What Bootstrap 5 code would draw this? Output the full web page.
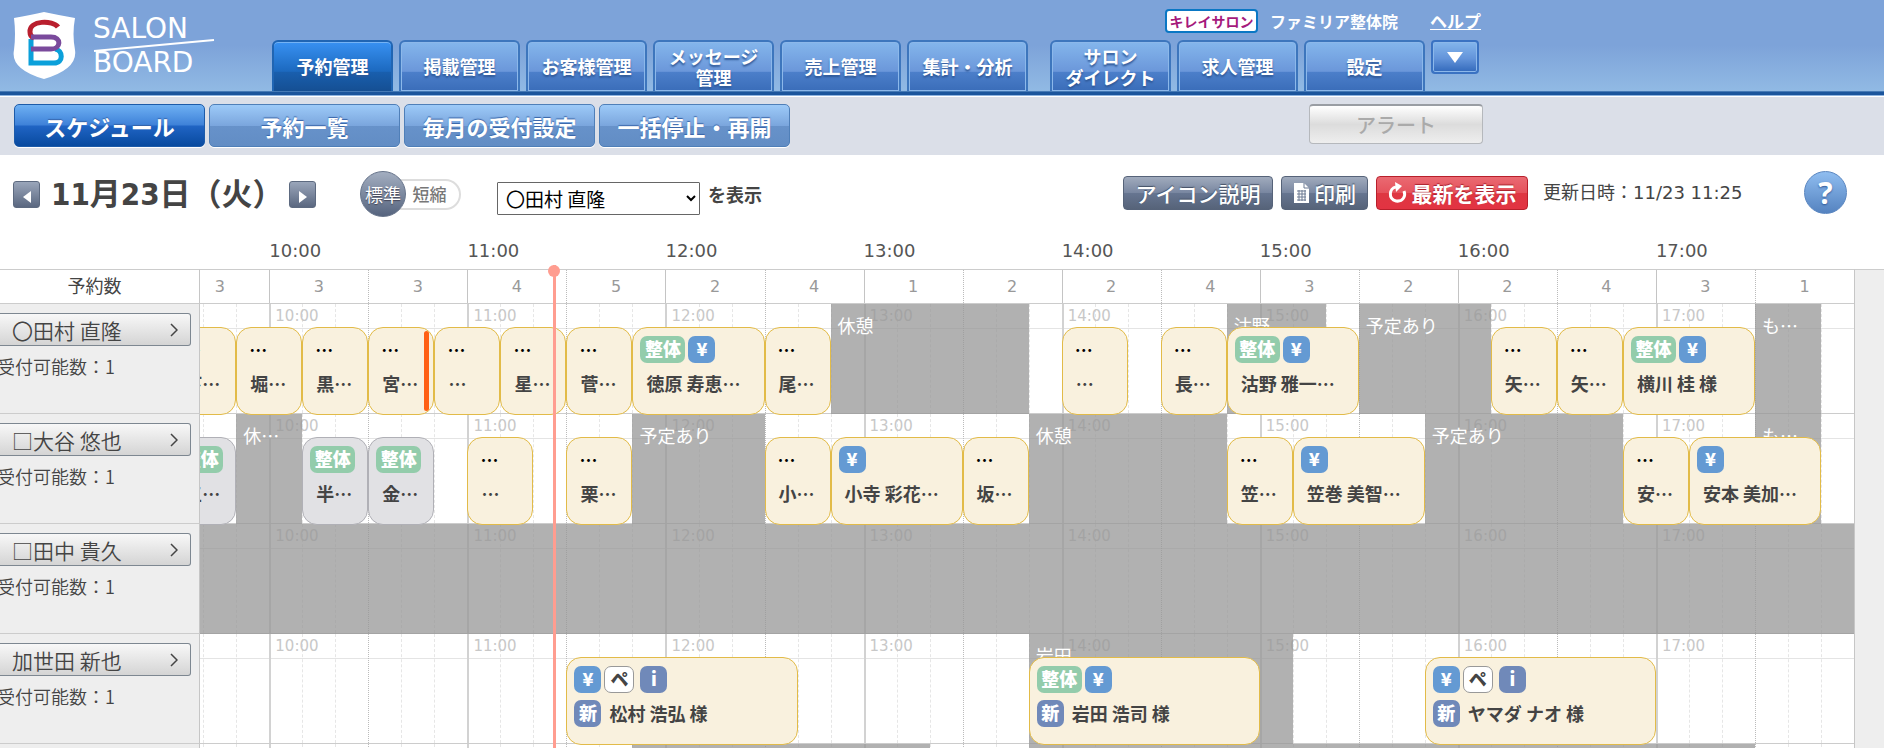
<!DOCTYPE html>
<html lang="ja">
<head>
<meta charset="utf-8">
<meta name="viewport" content="width=device-width, initial-scale=1">
<title>SALON BOARD スケジュール</title>
<link href="https://cdn.jsdelivr.net/npm/bootstrap@5.3.0/dist/css/bootstrap.min.css" rel="stylesheet">
<style>
  :root { --jp: "Noto Sans CJK JP", "DejaVu Sans", sans-serif; --num: "DejaVu Sans", "Noto Sans CJK JP", sans-serif; }
  body { font-family: var(--jp); font-size: 18px; line-height: 24px; color: #444; background: #fff; }
  button, select { font-family: inherit; }

  /* global header */
  .top-bar { height: 96px; background: linear-gradient(#7da3d9 0 45px, #91bae4 91px, #6f9fd0 91px, #1b559c 92px, #1b559c 95px, #8fb4e0 95px); }
  .brand { padding: 12px 0 0 13px; width: 272px; }
  .brand-name { font: 28px/34px "DejaVu Sans", sans-serif; color: #fff; margin-left: 17px; }
  .brand-name span { display: block; }
  .brand-name svg { position: absolute; left: 0; top: 26px; }
  .tab { width: 121px; height: 51px; border: 2px solid #3d76bd; border-bottom: 0; border-radius: 6px 6px 0 0; padding: 0;
    color: #fff; font-size: 18px; line-height: 21px; font-weight: 600; text-shadow: 0 2px 2px #2e5796;
    background: linear-gradient(#84b6ec, #6b97da 60%, #4c7fca 61%, #3a6db9); box-shadow: inset 0 0 0 1px #8cb8ea; }
  .tab.active { background: linear-gradient(#3891f2, #1c69bf 60%, #195fae 61%, #154f93); border-color: #2065b3; box-shadow: inset 0 1px #74b3f5; }
  .tab-more { width: 48px; height: 34px; border: 2px solid #3a72c2; border-radius: 4px; background: linear-gradient(#84b6ec, #6394da 55%, #3269bb); box-shadow: inset 0 0 0 1px #8cb8ea; padding: 0; }
  .account { height: 40px; padding-top: 9px; margin-right: -2px; color: #fff; font-weight: 700; font-size: 16px; }
  .kirei { border: 2px solid #0a77c4; border-radius: 4px; background: #fff; color: #a51a7c; font-size: 14px; line-height: 20px; height: 24px; width: 93px; text-align: center; white-space: nowrap; }
  .shop { margin-left: 12px; }
  .help-link { color: #fff; margin-left: 32px; font-size: 17px; }

  /* second level */
  .sub-bar { background: #dbdfe8; border-top: 1px solid #fff; padding: 7px 14px 8px; }
  .sub-btn { width: 191px; height: 43px; border: 1px solid #4f7fb8; border-radius: 5px; padding: 0; color: #fff; font-size: 22px; line-height: 30px; font-weight: 600;
    text-shadow: 0 -1px 1px #3663a8; background: linear-gradient(#9dcaf8, #7ba6dd 50%, #6792ca 51%, #628dc4); box-shadow: 0 1px #fff; }
  .sub-btn.active { background: linear-gradient(#6eb0f3, #3e81d8 49%, #2064c4 51%, #084a9f); border-color: #1d5ba9; }
  .alert-btn { width: 174px; height: 40px; border: 1px solid #b5b8bc; border-top: 2px solid #999da3; border-radius: 4px; color: #aaa; font-size: 20px; font-weight: 500; padding: 0;
    background: linear-gradient(#fff, #dcdcdc 50%, #eee); margin-left: 515px; }

  /* toolbar */
  .tools { padding: 16px 37px 0 13px; height: 77px; }
  .arrow-btn { width: 27px; height: 27px; border: 1px solid #5d6a80; border-radius: 3px; padding: 0; background: linear-gradient(#9aa6ba, #5a6780); line-height: 1; }
  .day { font: bold 31px/40px "DejaVu Sans Condensed", "Noto Sans CJK JP", sans-serif; width: 249px; padding-left: 11px; white-space: nowrap; }
  .size-switch { margin-left: 44px; width: 101px; }
  .size-on { width: 46px; height: 46px; border-radius: 50%; border: 1px solid #66738a; background: linear-gradient(#a3aec0, #56647e); color: #fff; font-size: 18px; padding: 0; position: relative; z-index: 1; text-shadow: 0 1px 1px #445; }
  .size-off { width: 81px; height: 31px; border: 2px solid #ddd; border-radius: 16px; background: #fff; color: #777; font-size: 17px; line-height: 24px; font-weight: 500; margin-left: -26px; padding: 0 0 0 18px; }
  .staff-select { width: 203px; height: 33px; border: 1px solid #666; border-radius: 1px; background: #fff; color: #000; font-size: 19px; margin-left: 36px; padding: 0 4px; }
  .tool-btn { height: 34px; border: 1px solid #566379; border-radius: 4px; background: linear-gradient(#a0abbd, #7886a0 50%, #667590 51%, #566379); color: #fff; font-size: 21px; line-height: 30px; padding: 0; font-weight: 500; text-shadow: 0 -1px 1px #445065; }
  .tool-btn.reload { background: linear-gradient(#ea6a72, #e5525c 50%, #de3742 51%, #e23342); border-color: #b81f2b; font-weight: 700; text-shadow: 0 -1px 1px #a8202b; }
  .updated { font-family: var(--num); width: 261px; margin-left: 15px; white-space: nowrap; }
  .ask { width: 43px; height: 43px; border-radius: 50%; border: 1px solid #5a86c0; background: linear-gradient(#8fbdf0, #5583c0); color: #fff; font: bold 30px/40px "Noto Sans", sans-serif; padding: 0; text-shadow: 0 1px 2px #2e5796; }

  /* schedule */
  .staff-col { width: 200px; }
  .end-col { width: 30px; background: #eee; border-left: 1px solid #c6c6c6; border-top: 1px solid #ccc; margin-top: 37px; }
  .axis { height: 37px; background: #fff; }
  .count-head { height: 35px; background: #fff; border-top: 1px solid #ccc; border-bottom: 1px solid #ccc; }
  .count-head.names { text-align: center; line-height: 30px; padding-right: 10px; border-right: 1px solid #c6c6c6; }
  .staff-cell { height: 110px; padding: 9px 8px 0 0; border-bottom: 1px solid #ccc; border-right: 1px solid #c6c6c6; background: #eee; }
  .staff-btn { width: 191px; height: 33px; border: 1px solid #7d8791; border-left: 0; border-radius: 0 3px 3px 0; background: linear-gradient(#f8f8f8, #d4d4d4); color: #444; font-size: 21px; line-height: 28px; padding: 0 12px; font-weight: 350; }
  .capacity { margin: 8px 0 0 -3px; white-space: nowrap; font-weight: 350; }
  .lane, .axis, .count-head { position: relative; }
  .lane { height: 110px; border-bottom: 1px solid #ccc; }
  .lane::before { content: ""; position: absolute; left: 0; right: 0; top: 24px; border-top: 1px solid #e4e4e4; }
  /* everything on the time axis is placed from its start (--s) and length (--d) in minutes */
  .at { position: absolute; left: calc((var(--s) - 579) / 501 * 100%); }
  .span-at { width: calc(var(--d) / 501 * 100%); }
  .axis .at { font: 18px/24px var(--num); color: #555; top: 7px; }
  .cnt { top: 5px; font: 16px/24px var(--num); color: #999; text-align: center; }
  .tick { top: 0; bottom: 0; border-left: 1px dashed #e6e6e6; }
  .tick.half { border-left: 1px dotted #bbb; }
  .tick.hour { border-left: 1px solid #c4c4c4; }
  .lane .tick.hour { border-left: 2px solid #d2d2d2; }
  .hh { font: 15px/20px var(--num); color: #c8c8c8; top: 2px; padding-left: 6px; }
  .off { top: 0; height: 110px; background: rgba(151,151,151,.75); color: #fff; padding: 9px 7px; white-space: nowrap; overflow: hidden; text-overflow: ellipsis; }
  .bk { top: 23px; height: 88px; border: 1px solid #e2bb48; border-radius: 15px; background: #f9f1de; padding: 8px 7px; text-align: left; color: #444; font-weight: 700; font-size: 18px; line-height: 27px; overflow: hidden; display: flex; flex-direction: column; gap: 7px; z-index: 1; }
  .bk.done { background: #e1e1e4; border-color: #b0b0b6; }
  .bk > span { display: flex; align-items: center; height: 27px; white-space: nowrap; }
  .bk .icons { gap: 3px; }
  .bk .dots { padding-left: 5px; color: #000; }
  .bk .who { padding-left: 6px; }
  .bk .tagi + .who { padding-left: 8px; }
  .tagi { height: 27px; min-width: 27px; border-radius: 7px; color: #fff; background: #649ad3; text-align: center; line-height: 24px; flex: none; }
  .tagi.seitai { width: 45px; background: #93ccab; }
  .tagi.pe { width: 30px; background: #fff; border: 1px solid #999; color: #444; margin-right: 3px; line-height: 22px; }
  .tagi.info { background: #7089b9; }
  .flagbar::after { content: ""; position: absolute; right: 4px; top: 3px; bottom: 3px; width: 5px; border-radius: 3px; background: #ff6015; }
  .now { top: 33px; bottom: 0; width: 3px; background: #ff9d90; z-index: 2; pointer-events: none; }
  .now::before { content: ""; position: absolute; left: -5px; top: 0; width: 12px; height: 12px; border-radius: 50%; background: #ff9d90; }
</style>
</head>
<body>
<div class="vh-100 overflow-hidden">
  <header class="top-bar d-flex">
    <a class="brand d-flex align-items-start text-decoration-none flex-shrink-0" href="#" aria-label="SALON BOARD">
      <svg width="63" height="67" viewBox="0 0 63 67" fill="none">
        <path d="M1 6Q18 3 31 0Q45 3 62 6Q59 22 62 38Q65 57 31 67Q-3 57 1 38Q3 22 1 6Z" fill="#fff"/>
        <g stroke-width="5">
          <path d="M18 27V51H41C51 51 50 38 42 37" stroke="#0ba0da"/>
          <path d="M45 15C40 8 16 8 17 20C17 23 18 25 21 26" stroke="#b91f2e"/>
          <path d="M18 25H38C49 25 48 37 38 37H18" stroke="#7a4a9c"/>
        </g>
      </svg>
      <span class="brand-name position-relative"><span>SALON</span><span>BOARD</span>
        <svg width="122" height="16" viewBox="0 0 122 16"><path d="M1 13L121 2" stroke="#fff" stroke-width="2"/></svg>
      </span>
    </a>
    <div class="flex-shrink-0">
      <div class="account d-flex justify-content-end align-items-start">
        <span class="kirei">キレイサロン</span>
        <span class="shop">ファミリア整体院</span>
        <a class="help-link" href="#">ヘルプ</a>
      </div>
      <nav class="d-flex align-items-start" style="gap:6px">
        <button class="tab active">予約管理</button>
        <button class="tab">掲載管理</button>
        <button class="tab">お客様管理</button>
        <button class="tab">メッセージ<br>管理</button>
        <button class="tab">売上管理</button>
        <button class="tab me-3">集計・分析</button>
        <button class="tab">サロン<br>ダイレクト</button>
        <button class="tab">求人管理</button>
        <button class="tab">設定</button>
        <button class="tab-more" aria-label="メニュー"><svg width="16" height="11" viewBox="0 0 16 11" class="d-block mx-auto"><path d="M0 0H16L8 11Z" fill="#fff"/></svg></button>
      </nav>
    </div>
  </header>

  <nav class="sub-bar d-flex gap-1">
    <button class="sub-btn active">スケジュール</button>
    <button class="sub-btn">予約一覧</button>
    <button class="sub-btn">毎月の受付設定</button>
    <button class="sub-btn">一括停止・再開</button>
    <button class="alert-btn">アラート</button>
  </nav>

  <div class="tools d-flex align-items-start">
    <div class="d-flex align-items-center">
      <button class="arrow-btn" aria-label="前の日"><svg width="8" height="12" viewBox="0 0 8 12"><path d="M8 0V12L0 6Z" fill="#fff"/></svg></button>
      <span class="day">11月23日（火）</span>
      <button class="arrow-btn" aria-label="次の日"><svg width="8" height="12" viewBox="0 0 8 12"><path d="M0 0V12L8 6Z" fill="#fff"/></svg></button>
      <div class="size-switch d-flex align-items-center">
        <button class="size-on">標準</button><button class="size-off">短縮</button>
      </div>
      <select class="staff-select mt-2" id="staff"><option>〇田村 直隆</option></select>
      <label class="fw-bold ms-2" for="staff">を表示</label>
    </div>
    <div class="d-flex ms-auto align-items-center">
      <button class="tool-btn me-2" style="width:150px">アイコン説明</button>
      <button class="tool-btn d-flex align-items-center justify-content-center me-2" style="width:87px">
        <svg width="17" height="20" viewBox="0 0 17 20" class="me-1"><path d="M1 0H11L16 5V20H1Z" fill="#fff"/><path d="M11 0V5H16M4 8H13M4 11H13M4 14H13M4 17H13M6 7V18M9 7V18M12 7V18" stroke="#6d7b93" fill="none"/></svg>印刷
      </button>
      <button class="tool-btn reload d-flex align-items-center justify-content-center" style="width:152px">
        <svg width="20" height="22" viewBox="0 0 20 22" class="me-1" fill="none"><path d="M8 5C1 6 0 17 8 19C15 20 18 14 16 9" stroke="#fff" stroke-width="3"/><path d="M7 0L14 4L8 10Z" fill="#fff"/></svg>最新を表示
      </button>
      <span class="updated">更新日時：11/23 11:25</span>
      <button class="ask" aria-label="ヘルプ">?</button>
    </div>
  </div>

  <main class="d-flex">
    <div class="staff-col flex-shrink-0" id="names">
      <div class="axis"></div>
      <div class="count-head names">予約数</div>
    </div>
    <div class="flex-grow-1 position-relative overflow-hidden" id="board">
      <div class="axis" id="axis"></div>
      <div class="count-head" id="counts"></div>
    </div>
    <div class="end-col flex-shrink-0"></div>
  </main>
</div>

<script src="https://cdn.jsdelivr.net/npm/bootstrap@5.3.0/dist/js/bootstrap.bundle.min.js"></script>
<script>
  // times are written as HHMM
  const min = t => Math.floor(t / 100) * 60 + t % 100;
  const at = (s, d) => `style="--s:${s}${d ? `;--d:${d}` : ''}"`;
  const byId = id => document.getElementById(id);

  const counts = [3, 3, 3, 4, 5, 2, 4, 1, 2, 2, 4, 3, 2, 2, 4, 3, 1];
  // off: [from, to, label]; bk: [from, to, icons, name, flags]
  const staff = [
    { name: '〇田村 直隆',
      off: [[1250, 1350, '休憩'], [1450, 1520, '沽野'], [1530, 1610, '予定あり'], [1730, 1750, 'も…']],
      bk: [[930, 950, '', '下…'], [950, 1010, '', '堀…'], [1010, 1030, '', '黒…'], [1030, 1050, '', '宮…', 'flagbar'], [1050, 1110, '', '…'], [1110, 1130, '', '星…'], [1130, 1150, '', '菅…'],
        [1150, 1230, 'S¥', '徳原 寿恵…'], [1230, 1250, '', '尾…'], [1400, 1420, '', '…'], [1430, 1450, '', '長…'], [1450, 1530, 'S¥', '沽野 雅一…'], [1610, 1630, '', '矢…'], [1630, 1650, '', '矢…'], [1650, 1730, 'S¥', '横川 桂 様']] },
    { name: '□大谷 悠也',
      off: [[950, 1010, '休…'], [1150, 1230, '予定あり'], [1350, 1450, '休憩'], [1550, 1650, '予定あり'], [1730, 1750, 'も…']],
      bk: [[930, 950, 'S', '三…', 'done'], [1010, 1030, 'S', '半…', 'done'], [1030, 1050, 'S', '金…', 'done'], [1100, 1120, '', '…'], [1130, 1150, '', '栗…'], [1230, 1250, '', '小…'], [1250, 1330, '¥', '小寺 彩花…'], [1330, 1350, '', '坂…'],
        [1450, 1510, '', '笠…'], [1510, 1550, '¥', '笠巻 美智…'], [1650, 1710, '', '安…'], [1710, 1750, '¥', '安本 美加…']] },
    { name: '□田中 貴久', off: [[930, 1800, '']], bk: [] },
    { name: '加世田 新也',
      off: [[1350, 1510, '岩田']],
      bk: [[1130, 1240, '¥Pi', '松村 浩弘 様', 'first'], [1350, 1500, 'S¥', '岩田 浩司 様', 'first'], [1550, 1700, '¥Pi', 'ヤマダ ナオ 様', 'first']] },
    { name: '', off: [[1150, 1320, ''], [1350, 1730, '']], bk: [] }
  ];
  const tag = {
    S: '<b class="tagi seitai">整体</b>', '¥': '<b class="tagi">¥</b>',
    P: '<b class="tagi pe">ペ</b>', i: '<b class="tagi info">i</b>'
  };

  let ticks = '', heads = '', hours = '';
  for (let m = 580; m < 1080; m += 10) {
    const kind = m % 60 === 0 ? 'hour' : m % 30 === 0 ? 'half' : '';
    ticks += `<i class="at tick ${kind}" ${at(m)}></i>`;
    if (kind) heads += `<i class="at tick ${kind}" ${at(m)}></i>`;
    if (kind === 'hour') hours += `<span class="at" ${at(m)}>${m / 60}:00</span>`;
  }
  byId('axis').innerHTML = hours;
  byId('counts').innerHTML = heads + counts.map((c, i) => `<span class="at span-at cnt" ${at(570 + i * 30, 30)}>${c}</span>`).join('');

  for (const p of staff) {
    byId('names').insertAdjacentHTML('beforeend', `<div class="staff-cell">` + (p.name ? `
      <button class="staff-btn d-flex align-items-center justify-content-between">${p.name}
        <svg width="8" height="14" viewBox="0 0 8 14" fill="none"><path d="M1 1L7 7L1 13" stroke="#444" stroke-width="1.5"/></svg></button>
      <div class="capacity">受付可能数：1</div>` : '') + `</div>`);
    byId('board').insertAdjacentHTML('beforeend', `<div class="lane">${ticks}${hours.replaceAll('"at"', '"at hh"')}` +
      p.off.map(([a, b, t]) => `<div class="at span-at off" ${at(min(a), min(b) - min(a))}>${t}</div>`).join('') +
      p.bk.map(([a, b, ic, n, f = '']) => `<button class="at span-at bk ${f}" ${at(min(a), min(b) - min(a))}>
        ${ic ? `<span class="icons">${[...ic].map(c => tag[c]).join('')}</span>` : '<span class="dots">…</span>'}
        <span>${f === 'first' ? '<b class="tagi info">新</b>' : ''}<span class="who">${n}</span></span></button>`).join('') + `</div>`);
  }
  byId('board').insertAdjacentHTML('beforeend', `<div class="at now" ${at(686)}></div>`);
</script>
</body>
</html>
